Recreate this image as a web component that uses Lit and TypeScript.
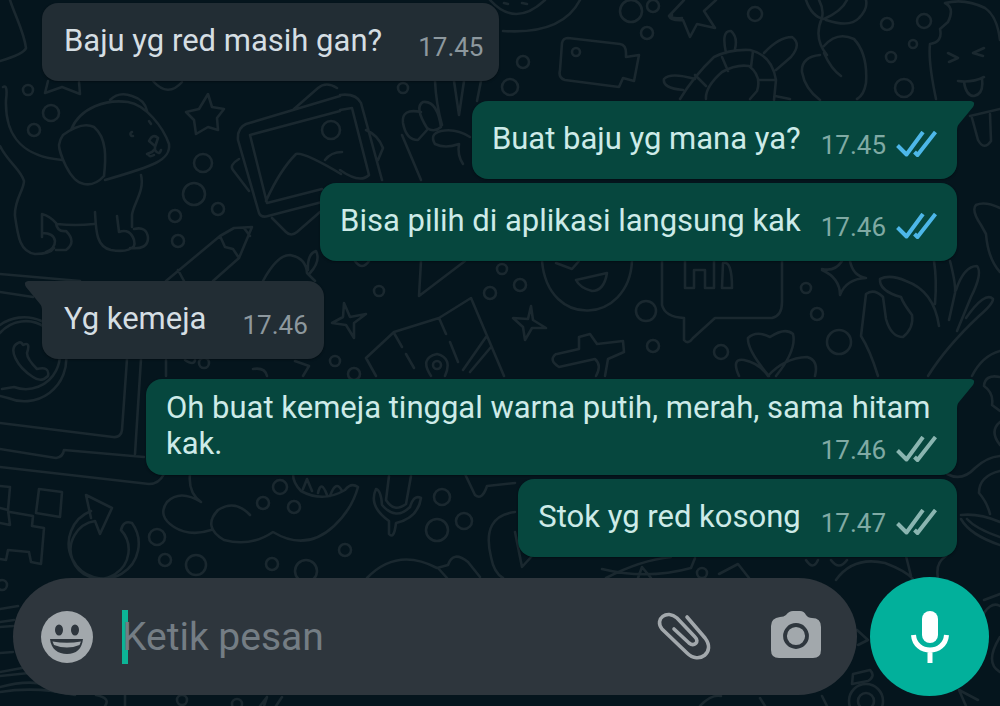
import { LitElement, html, css, svg } from "lit";
import { customElement, property } from "lit/decorators.js";

type Message = {
  text: string;
  time: string;
  out?: boolean;
  tail?: boolean;
  status?: "read" | "delivered";
  wide?: boolean;
  follows?: boolean;
};

const MESSAGES: Message[] = [
  { text: "Baju yg red masih gan?", time: "17.45" },
  { text: "Buat baju yg mana ya?", time: "17.45", out: true, tail: true, status: "read" },
  { text: "Bisa pilih di aplikasi langsung kak", time: "17.46", out: true, status: "read", follows: true },
  { text: "Yg kemeja", time: "17.46", tail: true },
  { text: "Oh buat kemeja tinggal warna putih, merah, sama hitam kak.", time: "17.46", out: true, tail: true, status: "delivered", wide: true },
  { text: "Stok yg red kosong", time: "17.47", out: true, status: "delivered", follows: true },
];

/* Small rings scattered over the wallpaper: x, y, radius */
const RINGS = [
  [28, 90, 5], [51, 113, 8], [34, 130, 6], [203, 163, 9], [194, 194, 11], [218, 209, 6], [175, 216, 6], [178, 241, 6],
  [331, 130, 9], [403, 88, 5], [523, 62, 6], [510, 87, 8], [631, 11, 11], [653, 6, 6], [647, 33, 6], [576, 52, 4],
  [755, 14, 7], [887, 24, 6], [924, 21, 7], [913, 44, 4], [891, 57, 5], [904, 88, 9], [502, 269, 5], [490, 293, 6],
  [520, 285, 6], [646, 311, 10], [653, 346, 6], [379, 291, 5], [335, 361, 5], [354, 374, 6], [437, 365, 4],
  [806, 288, 5], [817, 314, 6], [839, 342, 12], [721, 352, 7], [204, 363, 5], [280, 487, 7],
  [263, 503, 6], [294, 507, 6], [157, 537, 8], [165, 560, 6], [196, 565, 10], [272, 564, 6], [306, 571, 11],
  [345, 550, 6], [442, 497, 8], [464, 521, 8], [437, 530, 11], [702, 573, 5], [2, 585, 5], [182, 700, 5],
  [237, 704, 5], [866, 701, 17], [866, 701, 8],
];

const LINES = [
  /* envelope corner and stars, top left */
  "M10 0C16 18 24 32 26 48Q24 54 0 61",
  "M48 81L45 93L62 87L80 94L79 82M153 81Q168 98 182 82",
  "M208 94L212 107L224 109L217 118L218 130L208 127L196 134L194 120L186 112L199 109Z",
  /* dog */
  "M3 87Q8 84 6 100C5 130 16 156 62 160M0 146C8 162 21 170 24 181C24 190 14 200 15 216C18 237 20 252 35 254Q50 254 54 248",
  "M71 130C80 107 107 99 128 102C146 105 163 127 169 144C171 160 154 166 105 180M63 135Q82 121 94 127C107 138 106 158 104 176Q95 186 84 184C69 182 59 151 59 145Q60 139 63 135Z",
  "M110 100Q119 91 132 96Q145 100 147 111M147 154L152 152L155 149V146L149 141Q153 133 158 138L155 147M155 150Q159 156 161 150M154 155Q149 158 148 154",
  "M141 175C145 191 133 204 132 215V227M42 237V214Q50 216 57 224Q75 226 94 224M95 212C96 230 96 247 111 250Q128 253 134 246M117 216L119 232Q130 228 134 240Q136 248 130 248Q148 250 148 238Q147 226 134 229M42 233Q54 233 55 241Q55 249 46 252M56 223Q57 232 66 231Q77 242 66 250H56",
  "M132 132A2 2 0 1 0 133 136M149 121L151 124",
  /* picture frames */
  "M340 96L246 124Q237 128 238 140L259 213Q261 218 268 216L322 202M340 111L250 135L267 203L322 189M294 109L318 88Q326 81 337 88M266 201Q280 170 296 154Q304 152 341 174M325 160Q331 152 342 152M340 95Q356 93 361 103L382 180M340 110L352 108L369 175Q360 184 340 170M239 159Q229 165 233 170L249 191M272 218L286 232Q291 237 297 232L320 212M366 130Q378 135 383 148L378 160",
  /* hand */
  "M435 81Q436 103 442 125M454 81L459 115L464 81M477 101L481 81M423 102Q437 100 441 127Q434 133 427 128Q414 107 423 102M421 112Q401 108 403 123Q406 140 418 140L427 130M402 135L421 180M470 137Q456 128 441 131Q429 134 435 144Q445 149 459 144Q457 155 463 164",
  /* pizza, film camera */
  "M490 0Q515 28 545 0M503 31Q562 35 580 0M504 3l4 1M522 3l5 1",
  "M568 38L620 44Q626 45 626 53V57L639 55L634 81L623 78L619 87L565 80Q558 78 560 70L562 43Q563 38 568 38ZM672 15Q669 19 682 18M684 0L669 16Q671 21 683 20L690 37L697 24L715 28L704 11L716 0",
  /* turtle and leaf */
  "M680 99Q694 76 714 57Q730 49 750 50Q772 55 776 80L774 100M706 99Q705 87 722 72Q736 64 749 66Q762 76 757 91L750 99M726 53Q721 30 731 31Q738 37 735 49M764 53Q779 37 792 37Q802 44 791 57L776 70M683 90Q662 88 664 79Q670 72 695 79M695 75L706 86M722 57L728 71M753 51L751 67M759 80H776M775 96L790 99",
  "M806 0Q812 17 824 19Q842 11 847 0M826 20Q850 28 859 18Q868 9 866 0M819 0Q824 9 822 18Q813 38 827 55M820 55Q801 57 802 72Q805 89 820 100M824 46Q837 31 854 39Q868 54 866 83Q864 95 857 99M824 53Q831 69 841 76",
  /* ice cream */
  "M945 3Q965 -2 985 8Q997 16 1000 40M945 3Q955 8 948 22L940 29Q943 42 930 44Q928 61 936 99M948 53L958 58L949 62M984 48L973 53L983 56M958 81Q972 83 984 77M964 82Q966 96 974 96Q984 94 982 79M970 116L1000 109M972 118L978 140Q984 151 991 141L990 114",
  /* pencil and apple */
  "M166 281L220 236L234 228L252 227L239 258L213 281M220 236L225 247L233 249L239 258M178 270L184 281M244 228L250 236M263 281Q277 255 290 255Q306 258 307 273L315 281M308 270Q307 254 316 251Q321 261 310 273",
  /* laptop */
  "M0 274L80 281M0 292L33 297M0 325A42 42 0 1 1 8 398L0 396M0 333A34 34 0 1 1 14 387L2 389M23 345Q31 341 27 353Q27 359 37 369Q50 366 48 376Q41 383 33 377C17 367 7 348 18 343Q21 341 23 345M127 359L122 430Q121 438 113 437L0 423M141 359L135 454M0 449L56 458Q63 457 64 450L144 457M0 467L149 484Q159 484 164 474",
  /* blocks and refresh arrow */
  "M0 486L10 487L8 510L0 508M8 510L10 525L0 523M39 489L62 492L60 517L36 513ZM10 512L33 516L32 526L44 528L41 564L31 562L29 552L8 550L6 560L0 559",
  "M91 518L86 495L112 508L100 534L95 521A29 29 0 1 0 121 530Q123 520 132 523A35 35 0 1 1 91 511",
  /* play, sparkle and map */
  "M421 261L419 296L465 261M344 303L350 317L366 314L354 323L354 338L346 325L332 323L343 317ZM531 306L533 320L546 328L532 328L525 340L523 327L513 318L528 319ZM376 376L366 358L394 332L439 318L471 298L504 376M394 333L402 347M406 354L414 368M439 318L446 334M450 342L458 362M486 337L463 370M491 347L470 372M431 376Q419 358 437 354Q453 358 445 376",
  "M166 376V360M253 369Q265 367 267 376M295 361L309 366L303 376M185 360Q194 366 195 360M355 261Q362 271 369 261",
  /* smiley, tee, greeting balloon */
  "M542 261C548 330 629 324 632 261M556 263L572 269L579 261M576 280L607 273Q604 291 592 291Q580 288 576 280M557 354L579 349V337L590 334L597 344L623 341L624 352L608 359L605 376M556 354Q548 360 559 367L595 359Q602 365 596 376",
  "M662 261V305Q665 317 684 318V340Q688 345 693 338L715 318H772Q782 316 782 302V261M685 261V288H694V270H705V288H714V261M722 288L723 263Q732 260 732 288Z",
  "M769 376Q747 350 748 338Q756 330 770 337Q785 327 793 334Q797 350 776 376M739 376Q731 358 744 360Q759 363 768 376Q784 358 807 357Q819 360 815 376",
  /* sparkle and hand */
  "M822 269Q835 272 842 261M850 261Q853 276 866 278Q846 279 840 295Q840 278 822 270M878 376Q870 350 861 336L866 294Q874 288 883 297L886 319Q891 337 903 337Q914 328 912 315Q903 303 901 297Q879 291 880 279Q890 274 906 281Q934 291 939 326M935 304Q937 280 934 261M950 261Q956 284 955 293L949 320M956 290Q964 266 977 266Q983 273 971 297L957 331M966 318Q985 291 993 299Q993 304 979 316Q946 347 928 376",
  "M976 205Q971 210 981 225L986 234Q988 259 1000 272M1000 208Q985 201 976 205",
  "M972 376Q982 356 1000 351M1000 377Q985 374 984 386Q994 393 992 405L1000 411M1000 422Q989 431 1000 445M947 474Q962 482 975 468Q987 457 1000 456M1000 471Q979 476 979 493Q987 502 990 514M961 515Q979 513 1000 522M961 519Q970 535 1000 545M967 519Q976 529 1000 537",
  /* cloud, monster, microphone */
  "M190 474Q188 493 201 502Q180 489 167 502Q157 516 174 527Q190 537 211 530M250 515Q235 499 218 510Q202 527 224 540Q251 547 273 532Q306 552 334 526Q352 509 358 487Q351 482 345 490Q323 503 301 491Q293 483 293 474M303 489L307 479L312 491M318 493Q321 479 327 495M330 496Q336 479 342 491",
  "M389 476L386 500Q394 513 406 504L411 476M376 489Q368 506 389 521V534Q394 540 396 523Q418 518 421 498Q414 494 410 507Q396 521 382 505Q381 490 376 489M465 474L475 495Q482 501 487 486L515 483M515 512Q481 516 491 557Q494 573 503 578M515 532L522 567L532 556M367 578Q397 547 437 568L448 565Q453 550 468 562L480 577M438 568L447 578",
  "M606 578Q641 560 671 557M638 578L642 567L651 578M602 569Q647 580 691 568L695 558M719 574L738 564L749 578M806 560Q813 571 818 560M831 560Q839 571 847 560M836 580Q853 556 885 563Q906 571 913 579M906 556L911 576M946 556Q935 563 938 578",
  /* book and bits below the composer */
  "M0 609L18 606M0 622L14 620M0 627L13 626M0 653L13 652M0 672L22 668M0 676L29 673M0 687Q38 677 58 690M0 692Q36 686 75 695M96 695Q111 698 105 706M125 695V706M260 706L267 697L264 706M276 706L282 697",
  "M700 706Q711 694 721 696M765 706L760 698M827 706L822 696M857 630L868 640L858 645M853 674L870 670Q876 676 868 681L852 684ZM984 600L1000 594M980 620Q990 600 1000 606M1000 637Q984 663 1000 672M966 706L959 690L978 700",
];

@customElement("chat-wallpaper")
export class ChatWallpaper extends LitElement {
  static styles = css`
    :host { display: block; }
    .art { display: block; width: 100%; height: 100%; }
  `;
  render() {
    return html`<svg class="art" viewBox="0 0 1000 706" preserveAspectRatio="xMidYMid slice" aria-hidden="true"
      fill="none" stroke="#1a282f" stroke-width="2.6" stroke-linejoin="round" stroke-linecap="round">
      ${LINES.map((d) => svg`<path d=${d} />`)}
      ${RINGS.map(([x, y, r]) => svg`<circle cx=${x} cy=${y} r=${r} />`)}
    </svg>`;
  }
}

@customElement("chat-bubble")
export class ChatBubble extends LitElement {
  @property({ attribute: false }) message!: Message;

  static styles = css`
    :host { display: flex; }
    .bubble {
      position: relative;
      display: flex;
      align-items: flex-start;
      gap: 36px;
      box-sizing: border-box;
      padding: 20px 16px 18px 22px;
      border-radius: 16px;
      background: #222d34;
      color: #d5dee3;
      box-shadow: 0 1px 2px rgba(0, 8, 12, 0.5);
    }
    .out {
      margin-left: auto;
      gap: 20px;
      padding-left: 20px;
      padding-right: 20px;
      background: #06473e;
      color: #cdebe8;
    }
    .wide {
      display: flow-root;
      max-width: calc(100% - 104px);
      padding-top: 11px;
      padding-bottom: 9px;
    }
    .wide .text { display: inline; }
    .wide .meta { float: right; }
    .in.tailed { border-top-left-radius: 0; }
    .out.tailed { border-top-right-radius: 0; }
    .text { margin: 0; font-size: 31px; line-height: 36px; }
    .wide { font-size: 31px; line-height: 36px; }
    .meta {
      display: flex;
      align-items: center;
      gap: 10px;
      margin-top: 8px;
      font-size: 26px;
      line-height: 32px;
      color: #8d989e;
      white-space: nowrap;
    }
    .out .meta { color: #80aaa4; }
    .ticks { display: block; width: 41px; height: 28px; }
    .read { color: #4db7e8; }
    .delivered { color: #8ab5b0; }
    .tail { position: absolute; top: 0; width: 18px; height: 30px; }
    .in .tail { right: 100%; color: #222d34; }
    .out .tail { left: 100%; color: #06473e; }
  `;

  render() {
    const m = this.message;
    const cls = ["bubble", m.out ? "out" : "in", m.tail ? "tailed" : "", m.wide ? "wide" : ""].join(" ");
    return html`<div class=${cls}>
      ${m.tail
        ? html`<svg class="tail" viewBox="0 0 18 30" aria-hidden="true" fill="currentColor">
            ${m.out
              ? svg`<path d="M-1 0H14Q19 1 16 6L2 23Q0 25 0 30H-1Z" />`
              : svg`<path d="M19 0H4Q-1 1 2 6L16 23Q18 25 18 30H19Z" />`}
          </svg>`
        : ""}
      <p class="text">${m.text}</p>
      <span class="meta">
        <time>${m.time}</time>
        ${m.status
          ? html`<svg class="ticks ${m.status}" viewBox="0 0 41 28" role="img" aria-label=${m.status}
              fill="none" stroke="currentColor" stroke-width="4" stroke-linejoin="round">
              <path d="M1.500 14.500L10.500 23.500L27 1M18.500 21L21.500 24L39.500 1" />
            </svg>`
          : ""}
      </span>
    </div>`;
  }
}

@customElement("chat-composer")
export class ChatComposer extends LitElement {
  static styles = css`
    :host { display: flex; align-items: center; gap: 13px; }
    .field {
      flex: 1;
      display: flex;
      align-items: center;
      min-width: 0;
      height: 117px;
      box-sizing: border-box;
      padding: 0 36px 0 28px;
      border-radius: 59px;
      background: #2e363d;
    }
    button { display: block; padding: 0; border: 0; background: none; color: #a2a8ac; cursor: pointer; }
    svg { display: block; }
    .entry { position: relative; flex: 1; min-width: 0; display: flex; margin-left: 29px; }
    .entry::before {
      content: "";
      position: absolute;
      left: 0;
      top: 0;
      width: 6px;
      height: 54px;
      background: #0cb496;
    }
    .input {
      position: relative;
      width: 100%;
      height: 54px;
      padding: 0;
      border: 0;
      outline: 0;
      background: none;
      color: #d5dee3;
      caret-color: #0cb496;
      font-family: inherit;
      font-size: 39px;
    }
    .input::placeholder { color: #747d84; opacity: 1; }
    .camera { margin-left: 60px; }
    .mic {
      display: grid;
      place-items: center;
      width: 119px;
      height: 119px;
      border-radius: 50%;
      background: #02b09b;
      color: #fff;
    }
  `;

  render() {
    return html`
      <div class="field">
        <button class="emoji" aria-label="Emoji">
          <svg width="52" height="52" viewBox="0 0 52 52">
            <circle cx="26" cy="26" r="26" fill="currentColor" />
            <g fill="#2e363d">
              <ellipse cx="18" cy="19" rx="4" ry="5.500" /><ellipse cx="34" cy="19" rx="4" ry="5.500" />
              <path d="M9 28H42C41 38 35 43 26 43S10 38 9 28Z" />
            </g>
            <path d="M11.500 30.500Q26 33 40 30.500L38.500 34Q26 39 13 34Z" fill="currentColor" />
          </svg>
        </button>
        <div class="entry"><input class="input" type="text" placeholder="Ketik pesan" aria-label="Ketik pesan" /></div>
        <button class="attach" aria-label="Lampirkan">
          <svg width="54" height="52" viewBox="0 0 54 52" fill="none" stroke="currentColor" stroke-width="3.600" stroke-linecap="round">
            <path d="M17 18L32 32C37 36 43 31 38 26L20 7C10 -2 -3 8 5 18L30 42C42 54 59 41 48 27L30 6" />
          </svg>
        </button>
        <button class="camera" aria-label="Kamera">
          <svg width="50" height="52" viewBox="0 0 50 52" fill="currentColor">
            <path d="M15 4Q18 0 22 0H29Q33 0 35 4Q37 7 41 7Q50 7 50 16V39Q50 47 42 47H8Q0 47 0 39V15Q0 7 9 6Q13 6 15 4Z" />
            <circle cx="25" cy="25" r="11" fill="none" stroke="#2e363d" stroke-width="3.800" />
          </svg>
        </button>
      </div>
      <button class="mic" aria-label="Pesan suara">
        <svg width="38" height="52" viewBox="0 0 38 52">
          <rect x="11" y="0" width="16" height="32" rx="8" fill="currentColor" />
          <path d="M2.500 24C4 44 34 44 35.500 24M19 39V52" fill="none" stroke="currentColor" stroke-width="5" />
        </svg>
      </button>
    `;
  }
}

@customElement("app-root")
export class AppRoot extends LitElement {
  static styles = css`
    :host {
      position: relative;
      display: flex;
      flex-direction: column;
      box-sizing: border-box;
      min-height: 100vh;
      overflow: hidden;
      background: #05151d;
      font-family: Roboto, "Noto Sans", sans-serif;
    }
    .wallpaper { position: absolute; inset: 0; }
    .log { position: relative; display: flex; flex-direction: column; padding: 3px 43px 20px 42px; }
    .row { margin-top: 20px; }
    .row:first-child { margin-top: 0; }
    .row.follows { margin-top: 4px; }
    .composer { position: relative; margin-top: auto; padding: 0 11px 10px 13px; }
  `;

  render() {
    return html`
      <chat-wallpaper class="wallpaper"></chat-wallpaper>
      <main class="log">
        ${MESSAGES.map((m) => html`<chat-bubble class="row ${m.follows ? "follows" : ""}" .message=${m}></chat-bubble>`)}
      </main>
      <chat-composer class="composer"></chat-composer>
    `;
  }
}
